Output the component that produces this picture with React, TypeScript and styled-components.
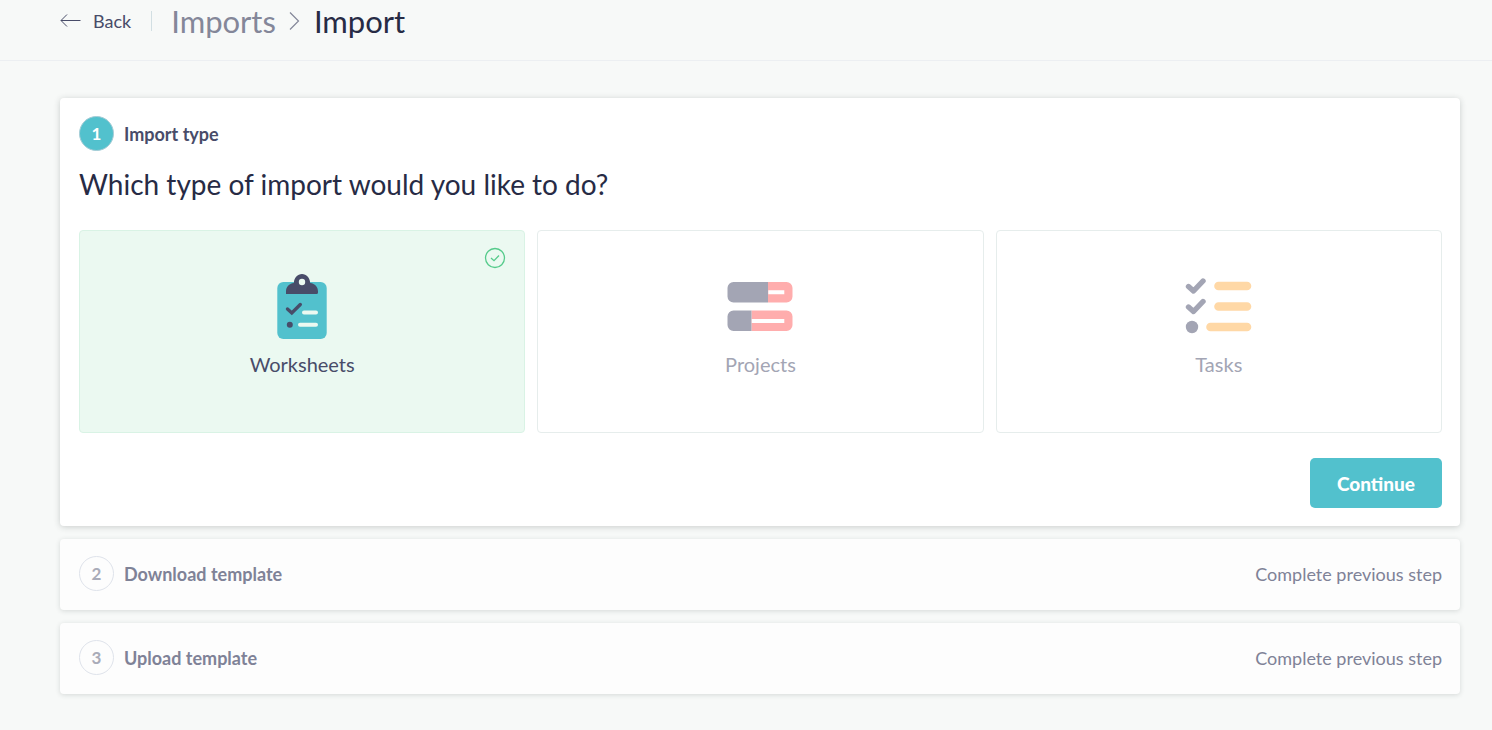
import React, { useState } from "react";
import styled, { createGlobalStyle, css } from "styled-components";

const GlobalStyle = createGlobalStyle`
  *, *::before, *::after { box-sizing: border-box; }
  body {
    margin: 0;
    background: #f7f9f8;
    color: #484c69;
    font-family: Lato, "Open Sans", sans-serif;
  }
`;

const Header = styled.header`
  display: flex;
  align-items: flex-start;
  height: 61px;
  padding: 0 32px 0 60px;
  border-bottom: 1px solid #eceff2;
`;

const BackLink = styled.a`
  display: flex;
  align-items: center;
  gap: 12px;
  height: 20px;
  margin-top: 11px;
  padding-right: 20px;
  border-right: 1px solid #d2dfe3;
  color: #484c69;
  font-size: 18px;
  line-height: 20px;
  text-decoration: none;
`;

const Breadcrumbs = styled.nav`
  display: flex;
  align-items: center;
  gap: 12px;
  height: 40px;
  margin: 1px 0 0 19px;
  font-size: 31px;
  line-height: 40px;
`;

const CrumbLink = styled.a`
  color: #848799;
  text-decoration: none;
`;

const PageTitle = styled.h1`
  margin: 0;
  color: #272b45;
  font-size: 31px;
  font-weight: 400;
  line-height: 40px;
`;

const Steps = styled.main`
  display: flex;
  flex-direction: column;
  gap: 13px;
  padding: 37px 32px 36px 60px;
`;

const Card = styled.section`
  padding: 18px 18px 18px 19px;
  border-radius: 4px;
  background: #fff;
  box-shadow: 0 1px 6px rgba(40, 50, 50, 0.22);
`;

const PendingCard = styled.section`
  display: flex;
  align-items: center;
  justify-content: space-between;
  padding: 17px 18px 19px 19px;
  border-radius: 4px;
  background: #fdfdfd;
  box-shadow: 0 1px 5px rgba(40, 50, 50, 0.16);
`;

const StepHeader = styled.div`
  display: flex;
  align-items: center;
  gap: 10px;
`;

const StepNumber = styled.span<{ $active?: boolean }>`
  display: flex;
  align-items: center;
  justify-content: center;
  width: 35px;
  height: 35px;
  border: 1px solid ${(p) => (p.$active ? "#a5ccd6" : "#dfe3eb")};
  border-radius: 50%;
  background: ${(p) => (p.$active ? "#52c1cd" : "transparent")};
  color: ${(p) => (p.$active ? "#fff" : "#a9abb8")};
  font-size: 17px;
  font-weight: 700;
`;

const StepTitle = styled.h2<{ $active?: boolean }>`
  margin: 0;
  color: ${(p) => (p.$active ? "#484c69" : "#7f8297")};
  font-size: 18px;
  font-weight: 700;
  line-height: 24px;
`;

const StepNote = styled.span`
  color: #7f8297;
  font-size: 18px;
  line-height: 24px;
`;

const Choices = styled.fieldset`
  min-width: 0;
  margin: 0;
  padding: 0;
  border: 0;
`;

const Question = styled.legend`
  padding: 13px 0 26px;
  color: #272b45;
  font-size: 28px;
  line-height: 40px;
`;

const ChoiceGrid = styled.div`
  display: grid;
  grid-template-columns: repeat(3, 1fr);
  gap: 12px;
`;

const Choice = styled.label<{ $selected: boolean }>`
  position: relative;
  display: flex;
  flex-direction: column;
  align-items: center;
  height: 203px;
  padding-top: 42px;
  border: 1px solid #e6edec;
  border-radius: 4px;
  color: #a3a5b4;
  font-size: 20px;
  line-height: 28px;
  cursor: pointer;
  ${(p) =>
    p.$selected &&
    css`
      border-color: #d9f3e5;
      background: #ebf9f1;
      color: #484c69;
    `}
`;

const ChoiceInput = styled.input`
  position: absolute;
  inset: 0;
  width: 100%;
  height: 100%;
  margin: 0;
  opacity: 0;
  cursor: pointer;
`;

const SelectedMark = styled.svg`
  position: absolute;
  top: 16px;
  right: 18px;
`;

const ChoiceIcon = styled.svg`
  display: block;
  width: 68px;
  height: 68px;
  margin-bottom: 9px;
`;

const Actions = styled.div`
  display: flex;
  justify-content: flex-end;
  margin-top: 25px;
`;

const ContinueButton = styled.button`
  height: 50px;
  padding: 0 27px;
  border: 0;
  border-radius: 5px;
  background: #52c1cd;
  color: #fff;
  font-family: inherit;
  font-size: 19px;
  font-weight: 900;
  cursor: pointer;
`;

const WorksheetsIcon = () => (
  <ChoiceIcon viewBox="0 0 68 68" aria-hidden="true">
    <rect x="9.300" y="9" width="49.400" height="57" rx="6" fill="#52c1cd" />
    <path
      fill="#484c69"
      d="M18 21v-2.500c0-4.500 3-8 7.800-8.500C26.300 4.500 29.500 1 34 1s7.700 3.500 8.200 9c4.800.5 7.800 4 7.800 8.500V19.500a1.500 1.500 0 0 1-1.500 1.500Z"
    />
    <circle cx="34" cy="9" r="3.200" fill="#ebf9f1" />
    <path d="m19.500 36 4.300 4 8.500-8.500" fill="none" stroke="#484c69" strokeWidth="3.400" strokeLinecap="round" />
    <circle cx="21.800" cy="51.700" r="3" fill="#484c69" />
    <path d="M36 39.600h12M32 51.800h16" stroke="#ebf9f1" strokeWidth="4" strokeLinecap="round" />
  </ChoiceIcon>
);

const ProjectsIcon = () => (
  <ChoiceIcon viewBox="0 0 68 68" aria-hidden="true">
    <path d="M42 9h18.500a6 6 0 0 1 6 6v8.500a6 6 0 0 1-6 6H42ZM25.500 37.500h35a6 6 0 0 1 6 6V52a6 6 0 0 1-6 6h-35Z" fill="#ffadad" />
    <path d="M42 9H7.500a6 6 0 0 0-6 6v8.500a6 6 0 0 0 6 6H42ZM25.500 37.500h-18a6 6 0 0 0-6 6V52a6 6 0 0 0 6 6h18Z" fill="#a3a5b4" />
    <path d="M42.300 19.300h16M25.800 48h32.500" stroke="#fff" strokeWidth="4" />
  </ChoiceIcon>
);

const TasksIcon = () => (
  <ChoiceIcon viewBox="0 0 68 68" aria-hidden="true">
    <path
      d="m3.500 13.500 5 4.500L18 8M3.500 34l5 4.500L18 28.500"
      fill="none"
      stroke="#a3a5b4"
      strokeWidth="5.400"
      strokeLinecap="round"
      strokeLinejoin="round"
    />
    <circle cx="7" cy="54" r="6.200" fill="#a3a5b4" />
    <path d="M33.500 13h28.500M33.500 33.500h28.500M25.500 54H62" stroke="#ffd8a6" strokeWidth="8.600" strokeLinecap="round" />
  </ChoiceIcon>
);

const importTypes = [
  { id: "worksheets", label: "Worksheets", Icon: WorksheetsIcon },
  { id: "projects", label: "Projects", Icon: ProjectsIcon },
  { id: "tasks", label: "Tasks", Icon: TasksIcon },
];

const pendingSteps = [
  { number: 2, title: "Download template" },
  { number: 3, title: "Upload template" },
];

export default function App() {
  const [selected, setSelected] = useState("worksheets");

  return (
    <>
      <GlobalStyle />
      <Header>
        <BackLink href="#back">
          <svg width="21" height="14" viewBox="0 0 21 14" fill="none" stroke="#484c69" aria-hidden="true">
            <path d="M20.500 6.500H1M7 .5l-6 6 6 6" />
          </svg>
          Back
        </BackLink>
        <Breadcrumbs aria-label="Breadcrumb">
          <CrumbLink href="#imports">Imports</CrumbLink>
          <svg width="14" height="18" viewBox="0 0 14 18" fill="none" stroke="#848799" strokeWidth="1.200" aria-hidden="true">
            <path d="m2 .5 8.500 8.500L2 17.500" />
          </svg>
          <PageTitle>Import</PageTitle>
        </Breadcrumbs>
      </Header>
      <Steps>
        <Card>
          <StepHeader>
            <StepNumber $active>1</StepNumber>
            <StepTitle $active>Import type</StepTitle>
          </StepHeader>
          <Choices>
            <Question>Which type of import would you like to do?</Question>
            <ChoiceGrid>
              {importTypes.map(({ id, label, Icon }) => (
                <Choice key={id} $selected={selected === id}>
                  <ChoiceInput
                    type="radio"
                    name="import-type"
                    value={id}
                    checked={selected === id}
                    onChange={() => setSelected(id)}
                  />
                  {selected === id && (
                    <SelectedMark width="22" height="22" viewBox="0 0 22 22" fill="none" stroke="#55cb8b" aria-hidden="true">
                      <circle cx="11" cy="11" r="9.500" strokeWidth="1.300" />
                      <path d="m7 11 3 2.700 5-5.200" strokeWidth="1.300" />
                    </SelectedMark>
                  )}
                  <Icon />
                  {label}
                </Choice>
              ))}
            </ChoiceGrid>
          </Choices>
          <Actions>
            <ContinueButton type="button">Continue</ContinueButton>
          </Actions>
        </Card>
        {pendingSteps.map((step) => (
          <PendingCard key={step.number}>
            <StepHeader>
              <StepNumber>{step.number}</StepNumber>
              <StepTitle>{step.title}</StepTitle>
            </StepHeader>
            <StepNote>Complete previous step</StepNote>
          </PendingCard>
        ))}
      </Steps>
    </>
  );
}
